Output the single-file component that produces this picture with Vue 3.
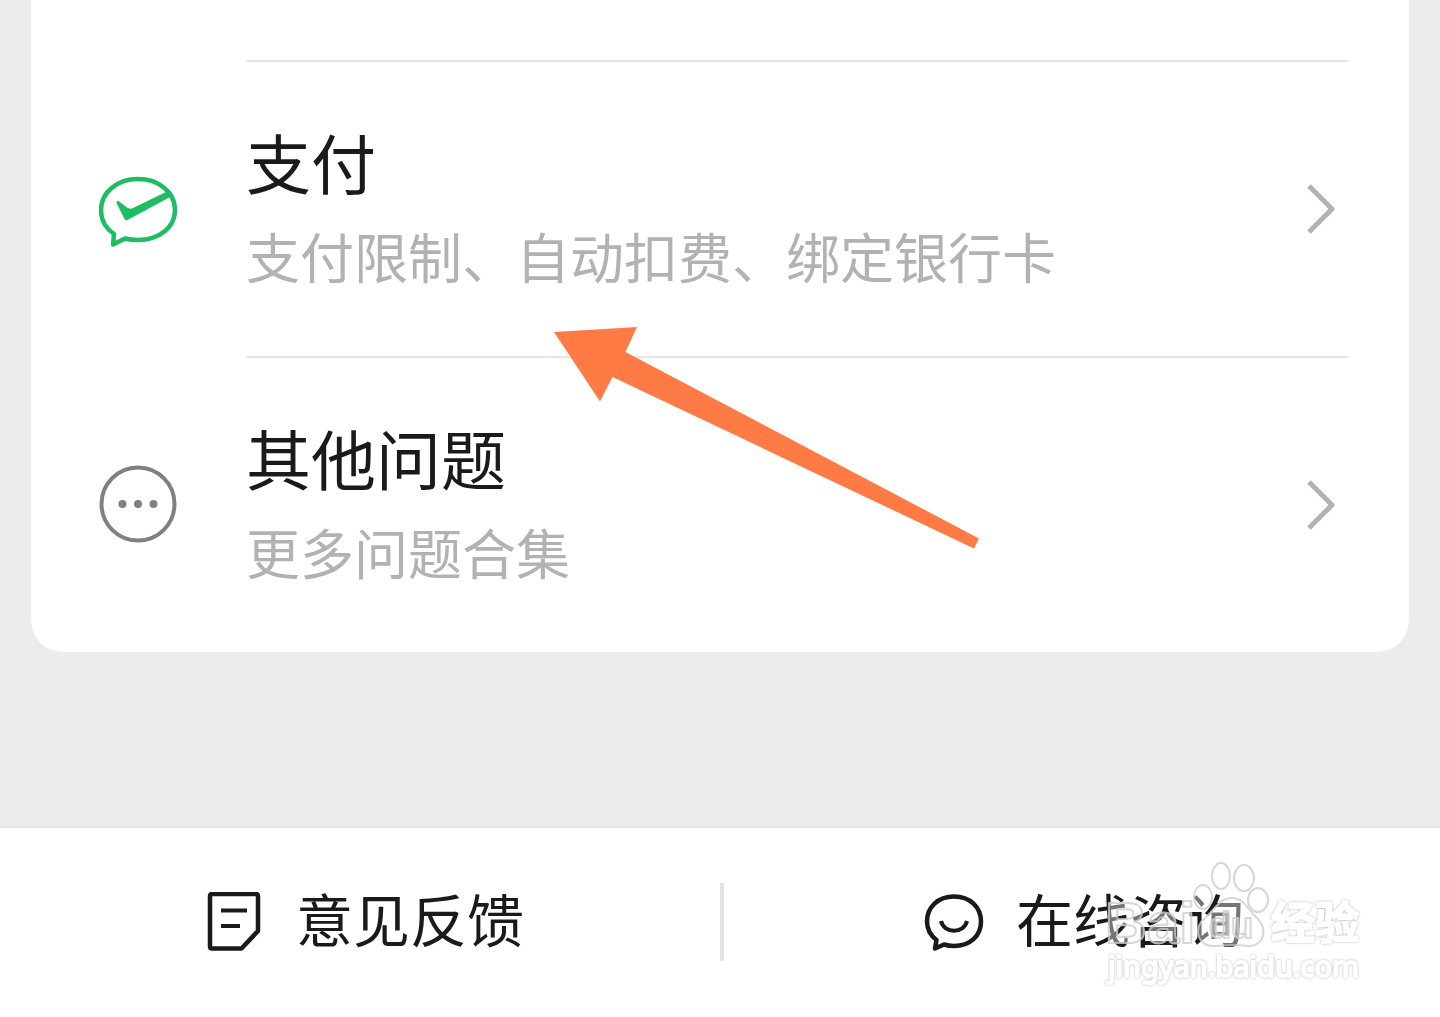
<template>
  <div class="page">
    <main class="content">
      <section class="card">
        <ul class="topics">
          <li v-for="topic in topics" :key="topic.id">
            <a class="topic" href="#">
              <svg v-if="topic.id === 'pay'" class="topic-icon" viewBox="0 0 78 78" aria-hidden="true">
                <path
                  d="M15 65 C6 59 2 50 2 41 C2 23.500 18 10 39 10 C60 10 76 23.500 76 41 C76 58.500 60 71 39 71 C34 71 30 70.500 26 69.500 L14 75.500 Z"
                  fill="none"
                  stroke="#1dbd63"
                  stroke-width="4.500"
                  stroke-linejoin="round"
                />
                <path
                  d="M17.500 34 Q17 31.500 19.500 32 L28 38.500 Q31 40.500 34 39 L68 22.500 L72 27.500 L28.500 51 Q26.500 52 25.500 50 Z"
                  fill="#1dbd63"
                />
              </svg>
              <svg v-else class="topic-icon" viewBox="0 0 78 78" aria-hidden="true">
                <circle cx="39" cy="39" r="36.500" fill="none" stroke="#808080" stroke-width="4" />
                <circle cx="23.500" cy="39" r="4" fill="#808080" />
                <circle cx="39" cy="39" r="4" fill="#808080" />
                <circle cx="54.500" cy="39" r="4" fill="#808080" />
              </svg>
              <span class="topic-body">
                <span class="topic-text">
                  <span class="topic-title">{{ topic.title }}</span>
                  <span class="topic-desc">{{ topic.desc }}</span>
                </span>
                <svg class="chevron" viewBox="0 0 28 52" aria-hidden="true">
                  <path d="M2 3 L25 26 L2 49" fill="none" stroke="#b2b2b2" stroke-width="5" stroke-linejoin="round" />
                </svg>
              </span>
            </a>
          </li>
        </ul>
        <svg class="arrow" viewBox="0 0 426 222" aria-hidden="true">
          <path d="M0 5 L83 0 L71.500 25 L425 211.500 L420 221.500 L58.500 50 L46 74.500 Z" fill="#ff7b45" />
        </svg>
      </section>
    </main>

    <footer class="footer">
      <button class="action" type="button">
        <svg class="action-icon" viewBox="0 0 60 60" aria-hidden="true">
          <g fill="none" stroke="#1a1a1a" stroke-width="4.500" stroke-linejoin="round">
            <path d="M8 2 H52 Q54 2 54 4 V39 L37.500 56.500 H8 Q6 56.500 6 54.500 V4 Q6 2 8 2 Z" />
            <path d="M17 18.500 H43 M17 34 H36" stroke-width="4" />
          </g>
        </svg>
        <span class="action-label">意见反馈</span>
      </button>
      <button class="action" type="button">
        <svg class="action-icon" viewBox="0 0 60 60" aria-hidden="true">
          <g fill="none" stroke="#1a1a1a" stroke-width="4.500" stroke-linejoin="round">
            <path
              d="M12.500 48 C6 43 3 37 3 29.500 C3 15 14 4.500 30 4.500 C46 4.500 57 15 57 29.500 C57 44 46 54 30 54 C26 54 23 53.500 20 52.500 L11 56.500 Z"
            />
            <path d="M17 29 C20 42 40 42 43 29" stroke-width="4" />
          </g>
        </svg>
        <span class="action-label">在线咨询</span>
      </button>
    </footer>

    <svg class="watermark" viewBox="0 0 270 140" aria-hidden="true">
      <g class="mark">
        <ellipse cx="121" cy="21" rx="9" ry="13" />
        <ellipse cx="144" cy="23" rx="10" ry="13" />
        <ellipse cx="103" cy="42" rx="9" ry="12" />
        <ellipse cx="158" cy="45" rx="10" ry="12" />
        <path d="M132 43 C120 43 115 54 106 62 C92 73 98 91 112 91 C124 91 138 89 148 91 C163 92 169 75 157 63 C148 55 144 43 132 43 Z" />
        <text class="mark-brand" x="5" y="88">Bai</text>
        <text class="mark-du" x="109" y="83">du</text>
      </g>
      <g class="mark-solid">
        <text class="mark-cn" x="171" y="84">经验</text>
        <text class="mark-url" x="8" y="122">jingyan.baidu.com</text>
      </g>
    </svg>
  </div>
</template>

<script setup>
import { ref } from 'vue';

const topics = ref([
  { id: 'pay', title: '支付', desc: '支付限制、自动扣费、绑定银行卡' },
  { id: 'other', title: '其他问题', desc: '更多问题合集' },
]);
</script>

<style>
body {
  margin: 0;
  background: #ececec;
}
</style>

<style scoped>
.page {
  position: relative;
  display: flex;
  flex-direction: column;
  min-height: 100vh;
  font-family: 'Noto Sans CJK SC', sans-serif;
  color: #1a1a1a;
}

.content {
  flex: 1;
  padding: 0 31px;
}

.card {
  position: relative;
  padding: 60px 61px 0 68px;
  background: #fff;
  border-radius: 0 0 32px 32px;
}

.topics {
  margin: 0;
  padding: 0;
  list-style: none;
}

.topic {
  display: flex;
  align-items: center;
  gap: 69px;
  color: inherit;
  text-decoration: none;
}

.topic-icon {
  flex: none;
  width: 78px;
  height: 78px;
}

.topic-body {
  flex: 1;
  display: flex;
  align-items: center;
  justify-content: space-between;
  padding: 52px 13px 52px 0;
  border-top: 2px solid #e6e6e6;
}

.topic-text {
  display: flex;
  flex-direction: column;
  white-space: nowrap;
}

.topic-title {
  font-size: 65px;
  line-height: 94px;
}

.topic-desc {
  font-size: 54px;
  line-height: 96px;
  color: #b2b2b2;
}

.chevron {
  flex: none;
  width: 28px;
  height: 52px;
}

.arrow {
  position: absolute;
  top: 327px;
  left: 523px;
  width: 426px;
  height: 222px;
  pointer-events: none;
}

.footer {
  display: flex;
  padding: 55px 0 56px 4px;
  background: #fff;
  border-top: 2px solid #e2e2e2;
}

.action {
  flex: 1;
  display: flex;
  align-items: center;
  justify-content: center;
  gap: 32px;
  height: 78px;
  padding: 0 0 0 4px;
  border: none;
  background: none;
  color: inherit;
  font-family: inherit;
  font-size: 57px;
  line-height: 68px;
  white-space: nowrap;
  cursor: pointer;
}

.action + .action {
  border-left: 4px solid #e5e5e5;
}

.action-label {
  padding-bottom: 10px;
}

.action-icon {
  flex: none;
  width: 60px;
  height: 60px;
}

.watermark {
  position: absolute;
  right: 70px;
  bottom: 22px;
  width: 270px;
  height: 140px;
  pointer-events: none;
}

.mark {
  fill: rgba(255, 255, 255, 0.4);
  stroke: rgba(205, 205, 205, 0.8);
  stroke-width: 2;
  stroke-linejoin: round;
}

.mark-solid {
  fill: #fff;
  stroke: #fff;
  stroke-width: 2;
  stroke-linejoin: round;
  filter: drop-shadow(0 0 1px #b4b4b4);
}

.mark-brand {
  font-family: 'Liberation Sans', sans-serif;
  font-size: 58px;
  font-weight: 700;
}

.mark-du {
  font-family: 'Liberation Sans', sans-serif;
  font-size: 36px;
  font-weight: 700;
}

.mark-cn {
  font-size: 44px;
  font-weight: 700;
}

.mark-url {
  font-family: 'Noto Sans', sans-serif;
  font-size: 29px;
}
</style>
